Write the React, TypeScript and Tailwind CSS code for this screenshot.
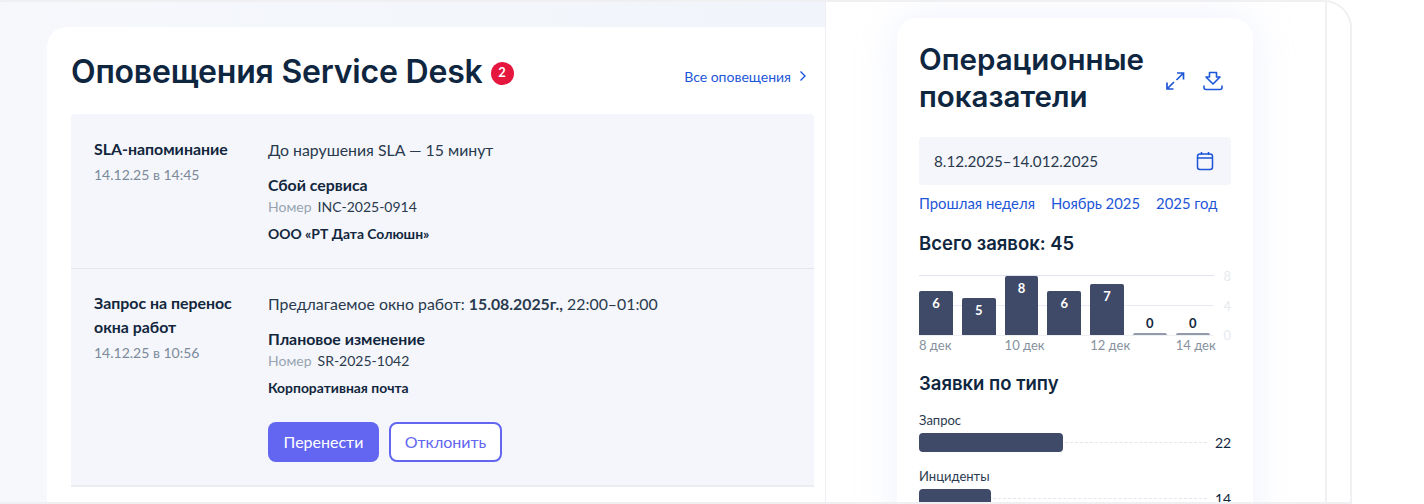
const bars = [
  { value: 6, label: "8 дек" },
  { value: 5, label: "" },
  { value: 8, label: "10 дек" },
  { value: 6, label: "" },
  { value: 7, label: "12 дек" },
  { value: 0, label: "" },
  { value: 0, label: "14 дек" },
];

const types = [
  { name: "Запрос", count: 22, width: 144 },
  { name: "Инциденты", count: 14, width: 72 },
];

const ChevronIcon = () => (
  <svg width="8" height="12" viewBox="0 0 8 12" fill="none" stroke="#1d56d8" strokeWidth="1.4">
    <path d="M1.5 1.5 6 6l-4.500 4.500" />
  </svg>
);

const ExpandIcon = () => (
  <svg width="20" height="20" viewBox="0 0 20 20" fill="none" stroke="#1d56d8" strokeWidth="1.7">
    <path d="M12 2h6.500v6.500M18.500 2 11.500 9" />
    <path d="M2 11.500V18h6.500M2 18l7-7" />
  </svg>
);

const DownloadIcon = () => (
  <svg width="20" height="20" viewBox="0 0 20 20" fill="none" stroke="#1d56d8" strokeWidth="1.6" strokeLinejoin="round">
    <path d="M6.500 1.500h7V6h3.500L10 13 3 6h3.500z" />
    <path d="M1 14.500v2a2 2 0 0 0 2 2h14a2 2 0 0 0 2-2v-2" />
  </svg>
);

const CalendarIcon = () => (
  <svg width="18" height="20" viewBox="0 0 18 20" fill="none" stroke="#1d56d8" strokeWidth="1.500">
    <rect x="1.500" y="3" width="15" height="15.500" rx="2.500" />
    <path d="M1.500 7h15M5.500 1v3M12.500 1v3" />
  </svg>
);

const Alert = ({
  title,
  date,
  children,
  kind,
  number,
  source,
}: {
  title: string;
  date: string;
  children: React.ReactNode;
  kind: string;
  number: string;
  source: string;
}) => (
  <div className="flex">
    <div className="w-[174px] shrink-0">
      <div className="text-[15.900px] leading-[24px] font-bold text-[#12263d] w-[150px] -mt-[1px]">{title}</div>
      <div className="mt-[2px] text-[14px] leading-[24px] text-[#7c8a99]">{date}</div>
    </div>
    <div>
      <div className="text-[15.850px] leading-[24px] text-[#2a3a4e]">{children}</div>
      <div className="mt-[11px] text-[15.850px] leading-[24px] font-bold text-[#12263d]">{kind}</div>
      <div className="flex text-[14px] leading-[20px]">
        <span className="text-[#98a4b1] mr-[6px]">Номер</span>
        <span className="text-[#2a3a4e]">{number}</span>
      </div>
      <div className="mt-[7px] text-[13.900px] leading-[20px] font-bold text-[#12263d]">{source}</div>
    </div>
  </div>
);

export default function App() {
  return (
    <div className="w-[1424px] h-[504px] bg-white overflow-hidden font-['Lato','Noto_Sans',sans-serif]">
      <div className="w-[1352px] h-[504px] flex border-t-2 border-b-2 border-r-2 border-[#f0f0f2] rounded-tr-[28px] overflow-hidden">
        <div className="w-[825px] shrink-0 pt-[25px] pl-[47px] bg-gradient-to-r from-[#f6f8fc] to-[#f1f4fa]">
          <div className="h-full bg-white rounded-tl-[20px] pl-[24px] pr-[11px] pt-[20px]">
            <div className="flex items-center justify-between h-[50px] pr-[7px]">
              <div className="flex items-center">
                <h1 className="font-['Inter',sans-serif] text-[32px] font-semibold text-[#0f2640] tracking-[-0.2px] whitespace-nowrap">
                  Оповещения Service Desk
                </h1>
                <span className="ml-[8px] mt-[2px] w-[23px] h-[23px] rounded-full bg-[#e5173f] text-white text-[13px] font-bold flex items-center justify-center">
                  2
                </span>
              </div>
              <a className="mt-[8px] flex items-center gap-[8px] text-[14px] text-[#1d56d8]">
                Все оповещения
                <ChevronIcon />
              </a>
            </div>
            <div className="mt-[17px] bg-[#f4f6fb] rounded-t-[4px]">
              <div className="h-[155px] pt-[24px] pl-[23px] border-b border-[#e4e6eb]">
                <Alert
                  title="SLA-напоминание"
                  date="14.12.25 в 14:45"
                  kind="Сбой сервиса"
                  number="INC-2025-0914"
                  source="ООО «РТ Дата Солюшн»"
                >
                  До нарушения SLA — 15 минут
                </Alert>
              </div>
              <div className="h-[218px] pt-[23px] pl-[23px] border-b-2 border-[#ebecf1]">
                <Alert
                  title="Запрос на перенос окна работ"
                  date="14.12.25 в 10:56"
                  kind="Плановое изменение"
                  number="SR-2025-1042"
                  source="Корпоративная почта"
                >
                  Предлагаемое окно работ: <b className="font-bold">15.08.2025г.,</b> 22:00–01:00
                </Alert>
                <div className="flex gap-[10px] pl-[174px] pt-[24px]">
                  <button className="w-[111px] h-[40px] rounded-[8px] bg-[#6266f1] text-white text-[16px]">
                    Перенести
                  </button>
                  <button className="w-[113px] h-[40px] rounded-[8px] bg-white border-2 border-[#6266f1] text-[#6266f1] text-[16px]">
                    Отклонить
                  </button>
                </div>
              </div>
            </div>
          </div>
        </div>
        <div className="w-[502px] shrink-0 bg-white border-l border-[#eeeff2] border-r-2 border-r-[#f0f0f2] pt-[16px] pl-[71px]">
          <div className="w-[356px] h-[600px] bg-white rounded-[20px] px-[22px] pt-[23px] shadow-[0_0_40px_rgba(200,210,245,0.3)]">
            <div className="flex items-center justify-between">
              <h2 className="font-['Inter',sans-serif] text-[29.500px] leading-[37px] font-semibold text-[#0f2640]">
                Операционные
                <br />
                показатели
              </h2>
              <div className="flex items-center gap-[18px] pr-[8px] mt-[6px]">
                <ExpandIcon />
                <DownloadIcon />
              </div>
            </div>
            <div className="mt-[22px] h-[48px] rounded-[4px] bg-[#f4f6fb] flex items-center justify-between pl-[15px] pr-[17px] text-[15.200px] text-[#2a3a4e]">
              8.12.2025–14.012.2025
              <CalendarIcon />
            </div>
            <div className="mt-[7px] flex gap-[16px] text-[14.850px] leading-[22px] text-[#1d56d8]">
              <a>Прошлая неделя</a>
              <a>Ноябрь 2025</a>
              <a>2025 год</a>
            </div>
            <div className="mt-[16px] text-[18.500px] leading-[26px] font-semibold font-['Inter',sans-serif] text-[#0f2640]">
              Всего заявок: 45
            </div>
            <div className="relative mt-[19px] h-[60px] w-[295px]">
              <div className="absolute top-0 left-0 w-[295px] border-t border-[#dfe3ee]" />
              <div className="absolute top-[30px] left-0 w-[295px] border-t border-[#e8ebf2]" />
              <div className="absolute -bottom-[1px] left-0 w-[295px] border-t border-[#eeeff3]" />
              <div className="absolute -right-[17px] -top-[6px] flex flex-col justify-between h-[73px] text-[13px] leading-[14px] text-[#e7e9ee]">
                <span>8</span>
                <span>4</span>
                <span>0</span>
              </div>
              <div className="relative h-full flex items-end gap-[9px]">
                {bars.map((bar, i) => (
                  <div
                    key={i}
                    className={
                      bar.value === 0
                        ? "relative w-[33.800px] rounded-t-[2px] bg-[#9299ab] text-center"
                        : "relative w-[33.800px] rounded-t-[2px] bg-[#3f4a68] text-center"
                    }
                    style={{ height: bar.value === 0 ? 2 : bar.value * 7.35 }}
                  >
                    <span
                      className={
                        bar.value === 0
                          ? "absolute left-0 right-0 -top-[20px] text-[13px] leading-[20px] font-bold text-[#12263d]"
                          : "absolute left-0 right-0 top-[2px] text-[13px] leading-[20px] font-bold text-white"
                      }
                    >
                      {bar.value}
                    </span>
                  </div>
                ))}
              </div>
            </div>
            <div className="flex w-[300px] gap-[9px] text-[13px] leading-[20px] text-[#85919e]">
              {bars.map((bar, i) => (
                <div key={i} className="w-[33.800px] whitespace-nowrap">
                  {bar.label}
                </div>
              ))}
            </div>
            <div className="mt-[15px] text-[18.500px] leading-[26px] font-semibold font-['Inter',sans-serif] text-[#0f2640]">
              Заявки по типу
            </div>
            <div className="mt-[15px] flex flex-col gap-[15px]">
              {types.map((t) => (
                <div key={t.name}>
                  <div className="text-[13px] leading-[18px] text-[#2a3a4e]">{t.name}</div>
                  <div className="flex items-center h-[19px] mt-[4px]">
                    <div className="h-[19px] rounded-[4px] bg-[#3f4a68]" style={{ width: t.width }} />
                    <div className="flex-1 ml-[2px] border-t border-dashed border-[#e4e6eb]" />
                    <div className="w-[16px] ml-[8px] text-right text-[14px] text-[#12263d]">{t.count}</div>
                  </div>
                </div>
              ))}
            </div>
          </div>
        </div>
      </div>
    </div>
  );
}
